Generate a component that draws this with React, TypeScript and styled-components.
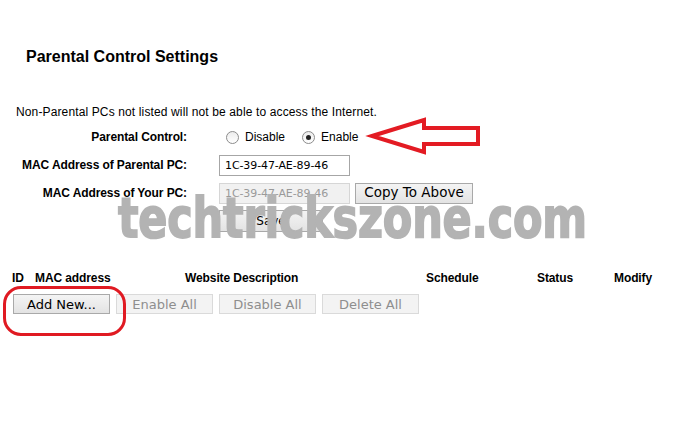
import React from "react";
import styled, { createGlobalStyle } from "styled-components";

const Global = createGlobalStyle`
  html, body { margin: 0; padding: 0; background: #ffffff; }
  body { font-family: "Liberation Sans", Arial, sans-serif; color: #000; }
`;

const Page = styled.div`
  position: relative;
  width: 690px;
  height: 435px;
  padding-top: 47px;
  box-sizing: border-box;
  overflow: hidden;
`;

const Title = styled.h1`
  margin: 0 0 0 26px;
  font-size: 16px;
  line-height: 20px;
  font-weight: bold;
`;

const Notice = styled.p`
  margin: 37px 0 0 16px;
  font-size: 12px;
  line-height: 16px;
  letter-spacing: 0.13px;
`;

const Form = styled.div`
  display: grid;
  grid-template-columns: 171px auto;
  grid-auto-rows: 28px;
  column-gap: 32px;
  margin: 3px 0 0 16px;
  align-items: center;
`;

const Label = styled.div`
  text-align: right;
  font-size: 12px;
  font-weight: bold;
  line-height: 28px;
  letter-spacing: -0.1px;
`;

const Controls = styled.div`
  display: flex;
  align-items: center;
`;

const RadioOption = styled.label<{ $first?: boolean }>`
  display: flex;
  align-items: center;
  gap: 6px;
  font-size: 12px;
  margin-left: ${(p) => (p.$first ? "7px" : "17px")};
`;

const RadioCircle = styled.span<{ $checked?: boolean }>`
  width: 13px;
  height: 13px;
  box-sizing: border-box;
  border-radius: 50%;
  border: 1px solid #8c8c8c;
  background: linear-gradient(#ececec, #ffffff);
  display: flex;
  align-items: center;
  justify-content: center;
  &::after {
    content: "";
    width: 5px;
    height: 5px;
    border-radius: 50%;
    background: ${(p) => (p.$checked ? "#222" : "transparent")};
  }
`;

const TextInput = styled.div<{ $disabled?: boolean }>`
  width: 131px;
  height: 21px;
  box-sizing: border-box;
  border: 1px solid ${(p) => (p.$disabled ? "#d6d6d6" : "#a6a6a6")};
  background: ${(p) => (p.$disabled ? "#f1f1f1" : "#ffffff")};
  color: ${(p) => (p.$disabled ? "#9a9a9a" : "#000")};
  font-family: "DejaVu Sans", Verdana, sans-serif;
  font-size: 11px;
  letter-spacing: -0.1px;
  line-height: 19px;
  padding-left: 5px;
`;

const Button = styled.button<{ $w: number; $h?: number; $size?: number; $disabled?: boolean }>`
  width: ${(p) => p.$w}px;
  height: ${(p) => p.$h ?? 20}px;
  box-sizing: border-box;
  margin: 0;
  padding: 0;
  border: 1px solid ${(p) => (p.$disabled ? "#dadada" : "#a9a9a9")};
  background: ${(p) =>
    p.$disabled ? "#f3f3f3" : "linear-gradient(#f4f4f4, #e3e3e3)"};
  color: ${(p) => (p.$disabled ? "#8e8e8e" : "#000")};
  font-family: "DejaVu Sans", Verdana, sans-serif;
  font-size: ${(p) => p.$size ?? 12}px;
  line-height: 1;
  text-align: center;
  cursor: default;
`;

const CopyButton = styled(Button)`
  margin-left: 5px;
`;

const Table = styled.div`
  margin: 35px 0 0 12px;
`;

const HeaderRow = styled.div`
  display: grid;
  grid-template-columns: 23px 150px 241px 111px 77px auto;
  font-size: 12px;
  font-weight: bold;
  line-height: 16px;
  letter-spacing: -0.1px;
`;

const ButtonRow = styled.div`
  display: flex;
  gap: 6px;
  margin: 8px 0 0 1px;
`;

const Watermark = styled.div`
  position: absolute;
  left: 118px;
  top: 191px;
  font-family: "DejaVu Sans", Verdana, sans-serif;
  font-weight: bold;
  font-size: 43px;
  line-height: 1;
  color: #b3b3b3;
  -webkit-text-stroke: 1.4px #b3b3b3;
  letter-spacing: -0.2px;
  transform: scaleY(1.27);
  transform-origin: top left;
  white-space: nowrap;
  pointer-events: none;
`;

const Arrow = styled.svg`
  position: absolute;
  left: 365px;
  top: 112px;
`;

const Highlight = styled.div`
  position: absolute;
  left: 3px;
  top: 286px;
  width: 123px;
  height: 50px;
  box-sizing: border-box;
  border: 3px solid #e01a22;
  border-radius: 18px;
  pointer-events: none;
`;

export default function App() {
  return (
    <Page>
      <Global />
      <Title>Parental Control Settings</Title>
      <Notice>Non-Parental PCs not listed will not be able to access the Internet.</Notice>
      <Form>
        <Label>Parental Control:</Label>
        <Controls>
          <RadioOption $first>
            <RadioCircle />
            Disable
          </RadioOption>
          <RadioOption>
            <RadioCircle $checked />
            Enable
          </RadioOption>
        </Controls>
        <Label>MAC Address of Parental PC:</Label>
        <Controls>
          <TextInput>1C-39-47-AE-89-46</TextInput>
        </Controls>
        <Label>MAC Address of Your PC:</Label>
        <Controls>
          <TextInput $disabled>1C-39-47-AE-89-46</TextInput>
          <CopyButton $w={118} $h={21} $size={13.5}>Copy To Above</CopyButton>
        </Controls>
        <div />
        <Controls>
          <Button $w={104} $h={22} $size={12}>Save</Button>
        </Controls>
      </Form>
      <Table>
        <HeaderRow>
          <span>ID</span>
          <span>MAC address</span>
          <span>Website Description</span>
          <span>Schedule</span>
          <span>Status</span>
          <span>Modify</span>
        </HeaderRow>
        <ButtonRow>
          <Button $w={97} $size={13}>Add New...</Button>
          <Button $w={97} $size={13} $disabled>Enable All</Button>
          <Button $w={97} $size={13} $disabled>Disable All</Button>
          <Button $w={97} $size={13} $disabled>Delete All</Button>
        </ButtonRow>
      </Table>
      <Watermark>techtrickszone.com</Watermark>
      <Arrow width="120" height="48" viewBox="0 0 120 48">
        <polygon
          points="7,24 59,8 59,16 113,16 113,32 59,32 59,40"
          fill="none"
          stroke="#e31b23"
          strokeWidth="4"
          strokeLinejoin="miter"
        />
      </Arrow>
      <Highlight />
    </Page>
  );
}
